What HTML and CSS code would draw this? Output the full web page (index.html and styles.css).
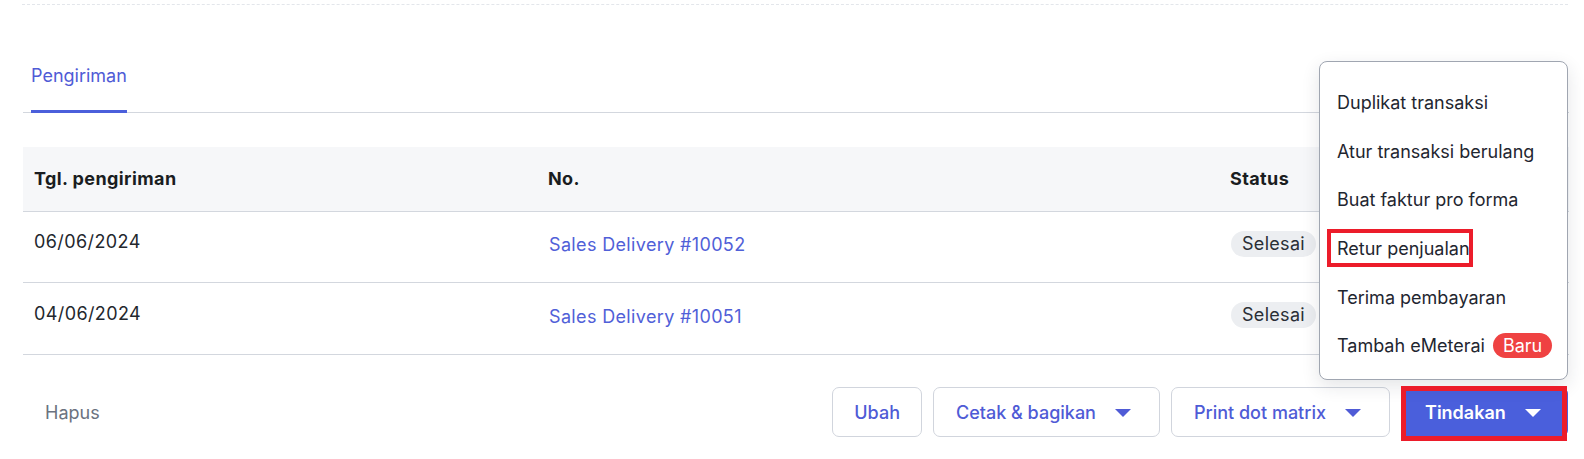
FILE: index.html
```html
<!DOCTYPE html>
<html lang="id">
<head>
<meta charset="utf-8">
<title>Pengiriman</title>
<link rel="stylesheet" href="styles.css">
</head>
<body>
<div class="page">
  <div class="dashed"></div>

  <div class="tabs">
    <div class="tab active">Pengiriman</div>
  </div>

  <div class="table">
    <div class="row head">
      <div class="cell c1">Tgl. pengiriman</div>
      <div class="cell c2">No.</div>
      <div class="cell c3">Status</div>
    </div>
    <div class="row body r1">
      <div class="cell c1 date">06/06/2024</div>
      <div class="cell c2 num"><a class="link">Sales Delivery #10052</a></div>
      <div class="cell c3"><span class="badge">Selesai</span></div>
    </div>
    <div class="row body r2">
      <div class="cell c1 date">04/06/2024</div>
      <div class="cell c2 num"><a class="link">Sales Delivery #10051</a></div>
      <div class="cell c3"><span class="badge">Selesai</span></div>
    </div>
  </div>

  <div class="footer">
    <button class="btn-text">Hapus</button>
    <div class="actions">
      <button class="btn">Ubah</button>
      <button class="btn has-caret">Cetak &amp; bagikan <span class="caret"></span></button>
      <button class="btn has-caret">Print dot matrix <span class="caret"></span></button>
      <button class="btn primary has-caret">Tindakan <span class="caret"></span></button>
    </div>
  </div>

  <div class="menu">
    <div class="menu-item">Duplikat transaksi</div>
    <div class="menu-item">Atur transaksi berulang</div>
    <div class="menu-item">Buat faktur pro forma</div>
    <div class="menu-item">Retur penjualan</div>
    <div class="menu-item">Terima pembayaran</div>
    <div class="menu-item">Tambah eMeterai <span class="new">Baru</span></div>
  </div>

  <div class="mark mark-retur"></div>
  <div class="mark mark-tindakan"></div>
</div>
</body>
</html>
```
FILE: styles.css
```css
* { box-sizing: border-box; }

body {
  margin: 0;
  background: #ffffff;
  font-family: "Inter", "Roboto", sans-serif;
  font-size: 18px;
  color: #1f2329;
}

.page {
  position: relative;
  padding: 4px 16px 0 23px;
  height: 459px;
  overflow: hidden;
}

.dashed {
  border-top: 1px dashed #e3e6eb;
  margin-left: -1px;
}

/* tabs */
.tabs {
  margin-top: 38px;
  display: flex;
  padding-left: 8px;
  border-bottom: 1px solid #d3d7de;
  margin-right: -1px;
}
.tab {
  padding: 21px 0 22px;
  line-height: 24px;
  color: #4f5bd6;
  font-size: 18px;
  margin-bottom: -1px;
  border-bottom: 3px solid #4b5fdb;
}

/* table */
.table {
  margin-top: 34px;
  margin-right: -1px;
}
.row {
  display: grid;
  grid-template-columns: 514px 684px 1fr;
  border-bottom: 1px solid #d3d7de;
}
.row.head {
  background: #f6f7f9;
  height: 65px;
  align-items: center;
  font-weight: 700;
  color: #1a1d21;
  letter-spacing: 0.4px;
}
.cell { padding-left: 11px; line-height: 24px; }
.row.head .c3 { padding-left: 9px; }

.row.body { height: 71px; align-items: start; }
.row.r2 { height: 72px; }
.row.body .c1 { padding-left: 11px; padding-top: 18px; }
.row.r2 .c1 { padding-top: 19px; }
.row.body .c2 { padding-left: 12px; padding-top: 21px; }
.row.r2 .c2 { padding-top: 22px; }
.row.body .c3 { padding-left: 10px; padding-top: 19px; }

.date { color: #23272d; letter-spacing: 0.4px; }
.link { color: #5060d8; text-decoration: none; cursor: pointer; letter-spacing: 0.35px; }

.badge {
  display: inline-block;
  background: #eceef1;
  color: #2a2f36;
  border-radius: 13px;
  height: 26px;
  line-height: 26px;
  padding: 0 11px;
  letter-spacing: 0.3px;
}

/* footer */
.footer {
  margin-top: 32px;
  display: flex;
  align-items: center;
  justify-content: space-between;
}
.btn-text {
  background: none;
  border: 0;
  font: inherit;
  color: #6b7280;
  padding: 0 0 0 22px;
  cursor: pointer;
}
.actions {
  display: flex;
  gap: 11px;
}
.btn {
  height: 50px;
  border: 1px solid #d1d5dd;
  border-radius: 7px;
  background: #fff;
  font-family: inherit;
  font-size: 18px;
  font-weight: 500;
  color: #4f5bd6;
  padding: 0 21px;
  display: flex;
  align-items: center;
  gap: 19px;
  cursor: pointer;
}
.btn.has-caret { padding: 0 28px 0 22px; }
.btn.primary {
  background: #4a5fdc;
  border-color: #4a5fdc;
  color: #fff;
  font-weight: 600;
  width: 167px;
  padding-left: 23px;
}
.caret {
  width: 0;
  height: 0;
  border-left: 8px solid transparent;
  border-right: 8px solid transparent;
  border-top: 8px solid currentColor;
  margin-top: 1px;
}

/* dropdown menu */
.menu {
  position: absolute;
  left: 1319px;
  top: 61px;
  width: 249px;
  height: 319px;
  background: #fff;
  border: 1px solid #a0a6b1;
  border-radius: 8px;
  box-shadow: 0 6px 18px rgba(30, 40, 60, 0.12);
  padding: 16px 0 8px;
}
.menu-item {
  height: 48.7px;
  display: flex;
  align-items: center;
  padding-left: 17px;
  color: #1f2630;
  white-space: nowrap;
}
.new {
  display: inline-block;
  margin-left: 8px;
  background: #ef4242;
  color: #fff;
  height: 25px;
  line-height: 25px;
  padding: 0 10px;
  border-radius: 13px;
}

/* red highlight annotations */
.mark {
  position: absolute;
  border: 4px solid #ec1c2a;
  pointer-events: none;
}
.mark-retur { left: 1327px; top: 229px; width: 146px; height: 38px; }
.mark-tindakan { left: 1401px; top: 386px; width: 166px; height: 55px; border-width: 5px; }
```
